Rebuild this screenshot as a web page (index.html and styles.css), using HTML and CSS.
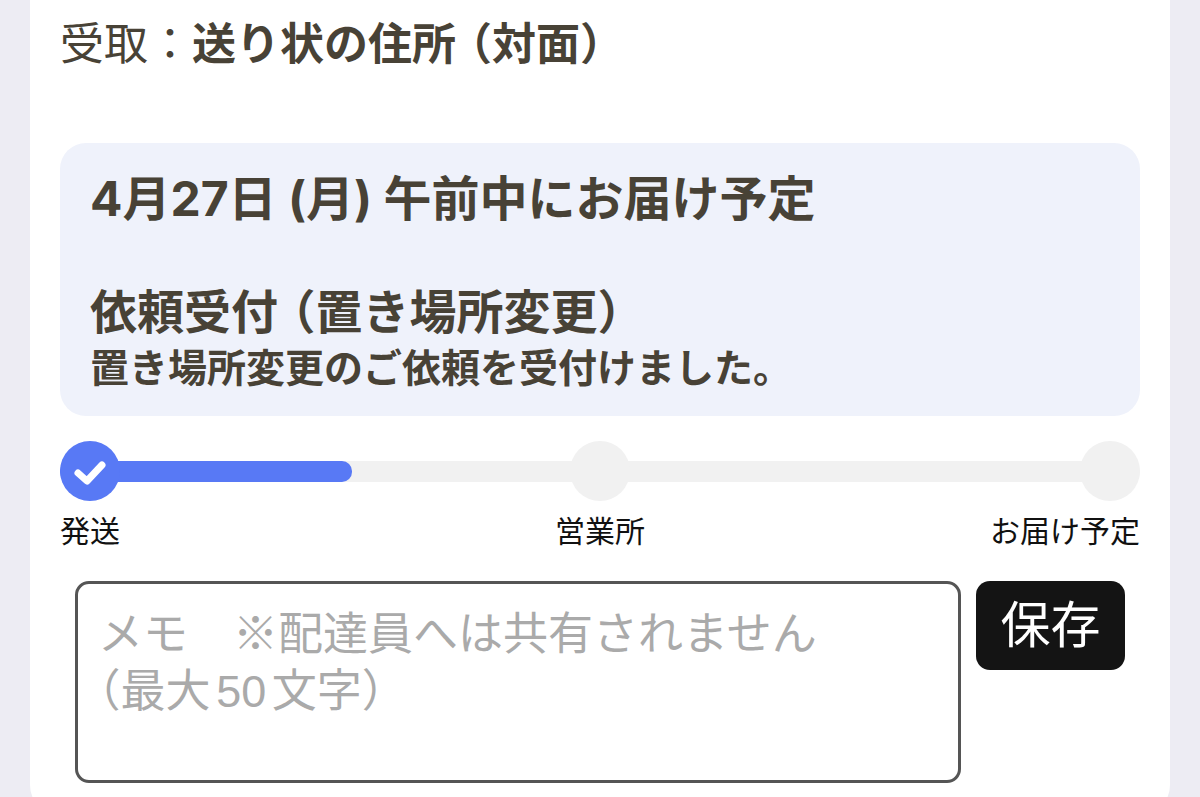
FILE: index.html
```html
<!DOCTYPE html>
<html lang="ja">
<head>
    <meta charset="UTF-8">
    <meta name="viewport" content="width=device-width, initial-scale=1.0">
    <title>お届け状況</title>
    <link rel="stylesheet" href="styles.css">
</head>
<body>
    <main class="card">
        <p class="receive">受取：<strong>送り状の住所<span class="paren">（対面）</span></strong></p>

        <section class="status">
            <h1 class="status-date">4月27日 (月) 午前中にお届け予定</h1>
            <h2 class="status-title">依頼受付<span class="paren">（置き場所変更）</span></h2>
            <p class="status-text">置き場所変更のご依頼を受付けました。</p>
        </section>

        <div class="progress">
            <div class="bar"><div class="bar-fill"></div></div>
            <span class="dot done">
                <svg viewBox="0 0 60 60" width="60" height="60" aria-hidden="true">
                    <path d="M18 32L27 40L42 24" fill="none" stroke="#fff" stroke-width="7" stroke-linecap="round" stroke-linejoin="round"/>
                </svg>
            </span>
            <span class="dot"></span>
            <span class="dot"></span>
        </div>
        <ol class="steps">
            <li>発送</li>
            <li>営業所</li>
            <li>お届け予定</li>
        </ol>

        <form class="memo">
            <textarea class="memo-text" aria-label="メモ" maxlength="50" placeholder="メモ　※配達員へは共有されません&#10;（最大50文字）"></textarea>
            <button class="memo-save" type="button">保存</button>
        </form>
    </main>
</body>
</html>
```

FILE: styles.css
```css
* {
    box-sizing: border-box;
}

body {
    margin: 0;
    padding: 0 30px;
    background-color: #edecf3;
    font-family: Inter, "Noto Sans CJK JP", sans-serif;
    color: #484236;
}

h1, h2, p, ol {
    margin: 0;
    padding: 0;
}

.card {
    background-color: #fff;
    border-radius: 0 0 30px 30px;
    padding: 12px 30px 32px;
}

.receive {
    font-size: 44px;
    line-height: 64px;
}

.receive strong {
    font-weight: 700;
}

/* 全角かっこを半角幅に詰める */
.paren {
    margin-left: 14px;
    font-feature-settings: "halt";
}

.status {
    margin-top: 67px;
    padding: 22px 30px 26px;
    background-color: #eff2fb;
    border-radius: 26px;
}

.status-date,
.status-title {
    font-size: 48px;
    line-height: 68px;
    font-weight: 700;
}

.status-title {
    margin-top: 45px;
    font-size: 47px;
}

.status-text {
    font-size: 39px;
    line-height: 44px;
    font-weight: 700;
}

.progress {
    position: relative;
    display: flex;
    justify-content: space-between;
    margin-top: 25px;
}

.bar {
    position: absolute;
    top: 20px;
    left: 0;
    right: 0;
    height: 21px;
    border-radius: 10px;
    background-color: #f1f1f1;
}

.bar-fill {
    width: 27%;
    height: 100%;
    background-color: #5879f5;
    border-radius: 10px;
}

.dot {
    position: relative;
    width: 60px;
    height: 60px;
    border-radius: 50%;
    background-color: #f1f1f1;
}

.done {
    background-color: #5879f5;
}

.steps {
    display: grid;
    grid-template-columns: 1fr 1fr 1fr;
    margin-top: 8px;
    list-style: none;
    font-size: 30px;
    line-height: 44px;
    color: #111;
}

.steps li:nth-child(2) {
    text-align: center;
}

.steps li:nth-child(3) {
    text-align: right;
}

.memo {
    display: flex;
    align-items: flex-start;
    gap: 15px;
    margin-top: 28px;
    padding: 0 15px;
}

.memo-text {
    flex: 1;
    height: 202px;
    padding: 22px 20px;
    border: 3px solid #555;
    border-radius: 14px;
    resize: none;
    font-family: "Liberation Sans", "Noto Sans CJK JP", sans-serif;
    font-size: 45px;
    line-height: 57px;
    font-feature-settings: "halt";
    text-autospace: normal;
}

.memo-text::placeholder {
    color: #aaa;
}

.memo-save {
    width: 149px;
    height: 89px;
    padding: 0 0 2px;
    border: 0;
    border-radius: 14px;
    background-color: #141414;
    color: #fff;
    font: inherit;
    font-size: 50px;
    line-height: 80px;
}
```
